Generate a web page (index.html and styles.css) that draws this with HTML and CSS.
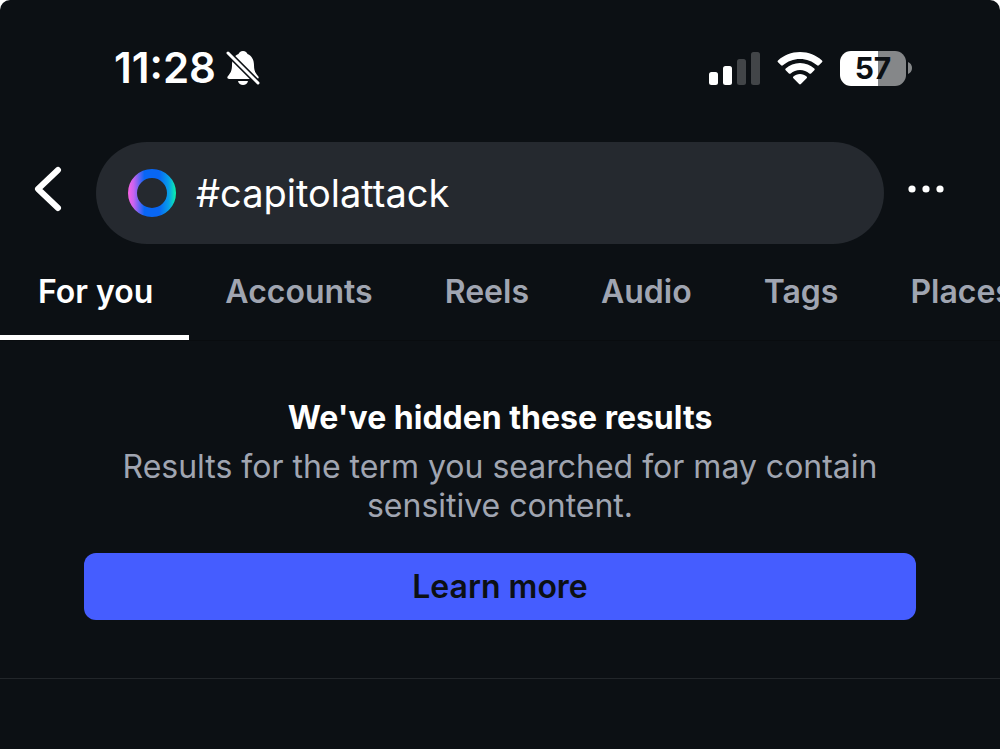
FILE: index.html
```html
<!DOCTYPE html>
<html lang="en">
<head>
  <meta charset="UTF-8">
  <meta name="viewport" content="width=device-width, initial-scale=1">
  <title>Search</title>
  <link rel="stylesheet" href="styles.css">
</head>
<body>
  <div class="screen">
    <div class="status-bar">
      <div class="status-left">
        <span class="time">11:28</span>
        <svg class="bell" viewBox="0 0 34 36" width="34" height="36" aria-hidden="true">
          <path fill="#fff" d="M17 1c-2.500 0-4 1.500-4.500 3C8 6 6 10 6 15c0 6-1.500 8-4 11-1.200 1.500-.8 3 1.200 3h27.600c2 0 2.400-1.500 1.200-3-2.500-3-4-5-4-11 0-5-2-9-6.500-11-.5-1.500-2-3-4.500-3z"/>
          <path fill="#fff" d="M12 31h10c-.5 2.700-2.500 4-5 4s-4.500-1.300-5-4z"/>
          <path stroke="#0c1014" stroke-width="6" d="M0 1l33 33"/>
          <path stroke="#fff" stroke-width="3" stroke-linecap="round" d="M2 3l30 30"/>
        </svg>
      </div>
      <div class="status-right">
        <svg viewBox="0 0 51 33" width="51" height="33" aria-hidden="true">
          <rect x="0" y="20" width="9" height="13" rx="2.500" fill="#fff"/>
          <rect x="14" y="14" width="9" height="19" rx="2.500" fill="#fff"/>
          <rect x="28" y="7" width="9" height="26" rx="2.500" fill="#424548"/>
          <rect x="42" y="0" width="9" height="33" rx="2.500" fill="#424548"/>
        </svg>
        <svg viewBox="0 0 46 34" width="46" height="34" aria-hidden="true">
          <path fill="#fff" d="M23 1C14.500 1 6.700 4.200 1 9.500c-.6.600-.6 1.200 0 1.800l3.100 3c.6.500 1.200.5 1.800 0C10.500 10.300 16.500 8 23 8s12.500 2.300 17.100 6.300c.6.500 1.200.5 1.800 0l3.100-3c.6-.6.600-1.200 0-1.800C39.300 4.200 31.500 1 23 1z"/>
          <path fill="#fff" d="M23 12c-5.500 0-10.500 2.100-14.300 5.500-.6.600-.6 1.200 0 1.800l3.200 3.100c.6.500 1.200.5 1.800 0 2.500-2.200 5.700-3.500 9.300-3.500s6.800 1.300 9.300 3.500c.6.500 1.200.5 1.800 0l3.200-3.100c.6-.6.600-1.200 0-1.800C33.500 14.100 28.500 12 23 12z"/>
          <path fill="#fff" d="M23 23c-2.500 0-4.800.9-6.600 2.400-.6.600-.6 1.200 0 1.800l5.700 5.800c.6.600 1.200.6 1.800 0l5.700-5.800c.6-.6.600-1.200 0-1.800C27.800 23.900 25.500 23 23 23z"/>
        </svg>
        <div class="battery">
          <span class="battery-level">57</span>
          <svg viewBox="0 0 4 12" width="4" height="12" aria-hidden="true">
            <path fill="#858789" d="M0 0c2.500 1 4 3 4 6s-1.500 5-4 6z"/>
          </svg>
        </div>
      </div>
    </div>

    <header class="search-row">
      <button class="icon-btn back-btn" type="button" aria-label="Back">
        <svg viewBox="0 0 28 46" width="28" height="46" aria-hidden="true">
          <path fill="none" stroke="#fff" stroke-width="6" stroke-linecap="round" stroke-linejoin="round" d="M24 4L4 23l20 19"/>
        </svg>
      </button>
      <label class="search-box">
        <svg viewBox="0 0 48 48" width="48" height="48" aria-hidden="true">
          <defs>
            <linearGradient id="ring" gradientUnits="userSpaceOnUse" x1="0" y1="24" x2="48" y2="24">
              <stop offset="0" stop-color="#fa62e4"/>
              <stop offset=".12" stop-color="#c763f0"/>
              <stop offset=".34" stop-color="#0866f4"/>
              <stop offset=".65" stop-color="#0866f4"/>
              <stop offset=".85" stop-color="#08a0e8"/>
              <stop offset="1" stop-color="#0cf5a8"/>
            </linearGradient>
          </defs>
          <circle cx="24" cy="24" r="19.500" fill="none" stroke="url(#ring)" stroke-width="9"/>
        </svg>
        <input class="search-input" type="text" aria-label="Search" value="#capitolattack" spellcheck="false">
      </label>
      <button class="icon-btn more-btn" type="button" aria-label="More options">
        <svg viewBox="0 0 36 8" width="36" height="8" aria-hidden="true">
          <circle cx="4" cy="4" r="3.600" fill="#fff"/>
          <circle cx="18" cy="4" r="3.600" fill="#fff"/>
          <circle cx="32" cy="4" r="3.600" fill="#fff"/>
        </svg>
      </button>
    </header>

    <nav class="tabs">
      <a class="tab active" href="#">For you</a>
      <a class="tab" href="#">Accounts</a>
      <a class="tab" href="#">Reels</a>
      <a class="tab" href="#">Audio</a>
      <a class="tab" href="#">Tags</a>
      <a class="tab" href="#">Places</a>
    </nav>

    <main class="notice">
      <h1>We've hidden these results</h1>
      <p>Results for the term you searched for may contain sensitive content.</p>
      <button class="learn-btn" type="button">Learn more</button>
    </main>
  </div>
</body>
</html>
```
FILE: styles.css
```css
* {
    box-sizing: border-box;
}

body {
    margin: 0;
    background-color: #fff;
    font-family: Inter, "Liberation Sans", sans-serif;
    color: #fff;
}

.screen {
    min-height: 100vh;
    background-color: #0c1014;
    border-radius: 10px 10px 0 0;
    overflow: hidden;
}

.status-bar {
    display: flex;
    justify-content: space-between;
    align-items: center;
    padding: 44px 88px 0 114px;
}

.status-left,
.status-right,
.battery {
    display: flex;
    align-items: center;
}

.status-left {
    gap: 10px;
}

.status-right {
    gap: 17px;
}

.time {
    font-size: 42px;
    font-weight: 600;
    line-height: 48px;
}

.battery {
    gap: 2px;
}

.battery-level {
    width: 66px;
    border-radius: 11px;
    background: linear-gradient(to right, #fff 57%, #858789 57%);
    color: #0c1014;
    font-size: 30px;
    font-weight: 700;
    line-height: 35px;
    text-align: center;
}

.search-row {
    display: flex;
    align-items: center;
    padding-top: 50px;
}

.icon-btn {
    display: flex;
    justify-content: center;
    border: 0;
    background: none;
    cursor: pointer;
}

.back-btn {
    width: 96px;
    padding: 0 0 9px;
}

.more-btn {
    width: 116px;
    padding: 0 32px 9px 0;
}

.search-box {
    display: flex;
    flex: 1;
    align-items: center;
    gap: 20px;
    min-width: 0;
    height: 102px;
    padding: 0 32px;
    border-radius: 51px;
    background-color: #25292f;
}

.search-input {
    flex: 1;
    min-width: 0;
    padding: 0;
    border: 0;
    outline: 0;
    background: none;
    color: #fff;
    font-family: inherit;
    font-size: 38px;
    line-height: 48px;
}

.tabs {
    display: flex;
    border-bottom: 1px solid #090c0f;
    overflow: hidden;
}

.tab {
    flex: none;
    padding: 28px 36px 23px;
    border-bottom: 5px solid transparent;
    color: #a0a5b1;
    font-size: 32px;
    font-weight: 600;
    line-height: 40px;
    text-decoration: none;
}

.tab.active {
    padding-left: 38px;
    border-color: #fff;
    color: #fff;
}

.notice {
    padding: 57px 84px 58px;
    border-bottom: 1px solid #22262a;
    text-align: center;
}

.notice h1 {
    margin: 0;
    font-size: 32px;
    font-weight: 700;
    line-height: 40px;
}

.notice p {
    margin: 9px 0 28px;
    color: #a0a5b1;
    font-size: 32px;
    line-height: 39px;
}

.learn-btn {
    width: 100%;
    padding: 14px;
    border: 0;
    border-radius: 12px;
    background-color: #455dff;
    color: #0c1014;
    font-family: inherit;
    font-size: 32px;
    font-weight: 600;
    line-height: 39px;
    cursor: pointer;
}
```
